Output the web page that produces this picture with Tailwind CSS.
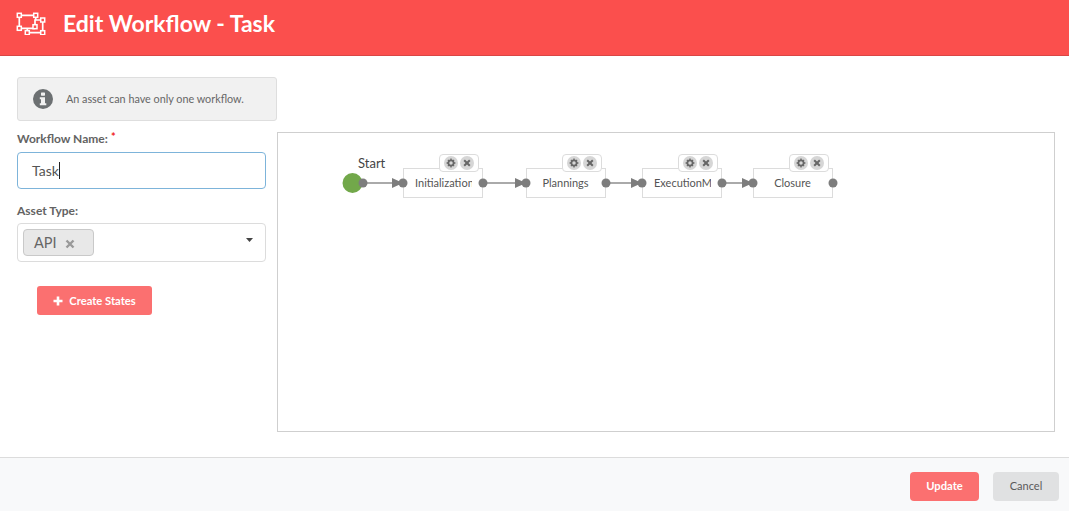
<!DOCTYPE html>
<html><head><script src="https://cdn.jsdelivr.net/npm/@tailwindcss/browser@4"></script></head>
<body class="m-0 bg-white font-['Lato','Open_Sans',sans-serif] overflow-hidden">
<div class="w-[1069px] h-[511px] flex flex-col">
<header class="h-[56px] shrink-0 bg-[#fb4f4d] border-b border-[#d94644] flex items-center pl-[16px]">
<svg width="33" height="24" viewBox="0 0 33 24" fill="#fb4f4d" stroke="white" stroke-width="1.5" class="mr-[14px] self-start mt-[11px]">
<path fill="none" stroke-width="1.7" d="M3.3 4.3H19.7V9M3.3 4.3V17.3H19M22 9H26.7V21.7H11.3V17.3M19 15.7V9H22"/>
<rect x="1.3" y="2.3" width="4" height="4"/><rect x="17.7" y="2.3" width="4" height="4"/><rect x="1.3" y="15.3" width="4" height="4"/><rect x="24.7" y="7" width="4" height="4"/><rect x="24.7" y="19.7" width="4" height="4"/><rect x="9.3" y="19.7" width="4" height="4"/><rect x="17" y="13.7" width="4" height="4"/>
</svg>
<h1 class="text-[23px] leading-none font-bold text-white mt-[-8px]">Edit Workflow - Task</h1>
</header>
<main class="flex-1 flex pl-[17px] pt-[21px] relative">
<div class="w-[260px] shrink-0">
<div class="h-[44px] w-[260px] bg-[#f1f1f1] border border-[#dedede] rounded-[3px] flex items-center pl-[15px]">
<svg width="20" height="20" viewBox="0 0 20 20" class="mr-[13px] shrink-0"><circle cx="10" cy="10" r="10" fill="#6c7072"/><rect x="8" y="3.5" width="4" height="3.2" rx="0.6" fill="#f1f1f1"/><path d="M6.8 8.2H12V14.3H13.3V16.3H6.8V14.3H8V10.2H6.8Z" fill="#f1f1f1"/></svg>
<span class="text-[10.8px] text-[#666]">An asset can have only one workflow.</span>
</div>
<div class="w-[249px]">
<div class="mt-[10px] h-[15px] text-[12px] leading-[15px] font-bold text-[#636363] relative">Workflow Name: <span class="absolute left-[94px] top-[-2px] text-[#f01c1c] text-[11px]">*</span></div>
<div class="mt-[6px] h-[37px] border border-[#7db4da] rounded-[4px] flex items-center pl-[14px] text-[14px] text-[#555]">Task<span class="w-px h-[17px] bg-[#222]"></span></div>
<div class="mt-[14px] h-[15px] text-[12px] leading-[15px] font-bold text-[#636363]">Asset Type:</div>
<div class="mt-[5px] h-[39px] border border-[#dcdcdc] rounded-[4px] flex items-center pl-[5px] pr-[12px] justify-between">
<div class="w-[71px] h-[27px] bg-[#e8e8e8] border border-[#c9c9c9] rounded-[4px] flex items-center pl-[10px] text-[14.5px] text-[#666]">API
<svg width="10" height="10" viewBox="0 0 10 10" class="ml-[8px] mt-[2px]"><path d="M1.5 1.5L8.5 8.5M8.5 1.5L1.5 8.5" stroke="#999" stroke-width="2.4"/></svg></div>
<svg width="7" height="4" viewBox="0 0 7 4" class="mt-[-6px]"><path d="M0 0H7L3.5 4Z" fill="#444"/></svg>
</div>
<button class="mt-[24px] ml-[20px] w-[115px] h-[29px] pt-[1px] bg-[#fb7070] rounded-[3px] flex items-center justify-center text-[11.2px] font-bold text-white">
<svg width="10" height="10" viewBox="0 0 10 10" class="mr-[6px]"><path d="M5 0.5V9.5M0.5 5H9.5" stroke="white" stroke-width="2.6"/></svg>Create States</button>
</div>
</div>
<div class="w-[778px] h-[300px] mt-[55px] border border-[#cfcfcf] relative text-[11px] text-[#555]">
<svg class="absolute left-0 top-0" width="776" height="298" fill="none">
<path d="M85 50H125M205 50H248M328 50H364M444 50H475" stroke="#aaa" stroke-width="2"/>
<path d="M114 45L125 50L114 55ZM237 45L248 50L237 55ZM353 45L364 50L353 55ZM464 45L475 50L464 55Z" fill="#7d7d7d"/>
</svg>
<span class="absolute left-[80px] top-[22px] text-[13px] leading-[16px] text-[#444]">Start</span>

<div class="absolute left-[125px] top-[35px] w-[80px] h-[30px] border border-[#dcdcdc] flex items-center pl-[11px]"><span class="block w-[57px] overflow-hidden whitespace-nowrap">Initialization</span></div>
<div class="absolute left-[161px] top-[21px] w-[40px] h-[18px] bg-white border border-[#dcdcdc] rounded-[4px] flex items-center justify-center gap-[2px]">
<span class="w-[14px] h-[14px] rounded-full bg-[#d6d6d6] flex items-center justify-center"><svg width="10" height="10" viewBox="0 0 10 10"><circle cx="5" cy="5" r="2.6" fill="none" stroke="#666" stroke-width="1.7"/><path d="M5 .6V2M5 8V9.4M.6 5H2M8 5H9.4M1.9 1.9L2.9 2.9M7.1 7.1L8.1 8.1M8.1 1.9L7.1 2.9M2.9 7.1L1.9 8.1" stroke="#666" stroke-width="1.3"/></svg></span>
<span class="w-[14px] h-[14px] rounded-full bg-[#d6d6d6] flex items-center justify-center"><svg width="8" height="8" viewBox="0 0 8 8"><path d="M1.2 1.2L6.8 6.8M6.8 1.2L1.2 6.8" stroke="#666" stroke-width="2"/></svg></span></div>

<div class="absolute left-[248px] top-[35px] w-[80px] h-[30px] border border-[#dcdcdc] flex items-center justify-center pr-[1px]"><span>Plannings</span></div>
<div class="absolute left-[284px] top-[21px] w-[40px] h-[18px] bg-white border border-[#dcdcdc] rounded-[4px] flex items-center justify-center gap-[2px]">
<span class="w-[14px] h-[14px] rounded-full bg-[#d6d6d6] flex items-center justify-center"><svg width="10" height="10" viewBox="0 0 10 10"><circle cx="5" cy="5" r="2.6" fill="none" stroke="#666" stroke-width="1.7"/><path d="M5 .6V2M5 8V9.4M.6 5H2M8 5H9.4M1.9 1.9L2.9 2.9M7.1 7.1L8.1 8.1M8.1 1.9L7.1 2.9M2.9 7.1L1.9 8.1" stroke="#666" stroke-width="1.3"/></svg></span>
<span class="w-[14px] h-[14px] rounded-full bg-[#d6d6d6] flex items-center justify-center"><svg width="8" height="8" viewBox="0 0 8 8"><path d="M1.2 1.2L6.8 6.8M6.8 1.2L1.2 6.8" stroke="#666" stroke-width="2"/></svg></span></div>

<div class="absolute left-[364px] top-[35px] w-[80px] h-[30px] border border-[#dcdcdc] flex items-center pl-[11px]"><span class="block w-[57px] overflow-hidden whitespace-nowrap">ExecutionManagement</span></div>
<div class="absolute left-[400px] top-[21px] w-[40px] h-[18px] bg-white border border-[#dcdcdc] rounded-[4px] flex items-center justify-center gap-[2px]">
<span class="w-[14px] h-[14px] rounded-full bg-[#d6d6d6] flex items-center justify-center"><svg width="10" height="10" viewBox="0 0 10 10"><circle cx="5" cy="5" r="2.6" fill="none" stroke="#666" stroke-width="1.7"/><path d="M5 .6V2M5 8V9.4M.6 5H2M8 5H9.4M1.9 1.9L2.9 2.9M7.1 7.1L8.1 8.1M8.1 1.9L7.1 2.9M2.9 7.1L1.9 8.1" stroke="#666" stroke-width="1.3"/></svg></span>
<span class="w-[14px] h-[14px] rounded-full bg-[#d6d6d6] flex items-center justify-center"><svg width="8" height="8" viewBox="0 0 8 8"><path d="M1.2 1.2L6.8 6.8M6.8 1.2L1.2 6.8" stroke="#666" stroke-width="2"/></svg></span></div>

<div class="absolute left-[475px] top-[35px] w-[80px] h-[30px] border border-[#dcdcdc] flex items-center justify-center pr-[1px]"><span>Closure</span></div>
<div class="absolute left-[511px] top-[21px] w-[40px] h-[18px] bg-white border border-[#dcdcdc] rounded-[4px] flex items-center justify-center gap-[2px]">
<span class="w-[14px] h-[14px] rounded-full bg-[#d6d6d6] flex items-center justify-center"><svg width="10" height="10" viewBox="0 0 10 10"><circle cx="5" cy="5" r="2.6" fill="none" stroke="#666" stroke-width="1.7"/><path d="M5 .6V2M5 8V9.4M.6 5H2M8 5H9.4M1.9 1.9L2.9 2.9M7.1 7.1L8.1 8.1M8.1 1.9L7.1 2.9M2.9 7.1L1.9 8.1" stroke="#666" stroke-width="1.3"/></svg></span>
<span class="w-[14px] h-[14px] rounded-full bg-[#d6d6d6] flex items-center justify-center"><svg width="8" height="8" viewBox="0 0 8 8"><path d="M1.2 1.2L6.8 6.8M6.8 1.2L1.2 6.8" stroke="#666" stroke-width="2"/></svg></span></div>

<svg class="absolute left-0 top-0 pointer-events-none" width="776" height="70" fill="none">
<circle cx="74.5" cy="50" r="10" fill="#72a84a"/>
<g fill="#7d7d7d"><circle cx="85" cy="50" r="4.5"/><circle cx="125" cy="50" r="4.5"/><circle cx="205" cy="50" r="4.5"/><circle cx="248" cy="50" r="4.5"/><circle cx="328" cy="50" r="4.5"/><circle cx="364" cy="50" r="4.5"/><circle cx="444" cy="50" r="4.5"/><circle cx="475" cy="50" r="4.5"/><circle cx="555" cy="50" r="4.5"/></g>
</svg>
</div>
</main>
<footer class="h-[54px] shrink-0 bg-[#f8f9fa] border-t border-[#dcdcdc] flex items-center justify-end pr-[10px] pt-[4px] gap-[14px]">
<button class="w-[69px] h-[29px] bg-[#fb7070] rounded-[4px] text-[11.2px] font-bold text-white">Update</button>
<button class="w-[66px] h-[29px] bg-[#e0e1e2] rounded-[4px] text-[11px] text-[#5a5a5a]">Cancel</button>
</footer>
</div>
</body></html>
